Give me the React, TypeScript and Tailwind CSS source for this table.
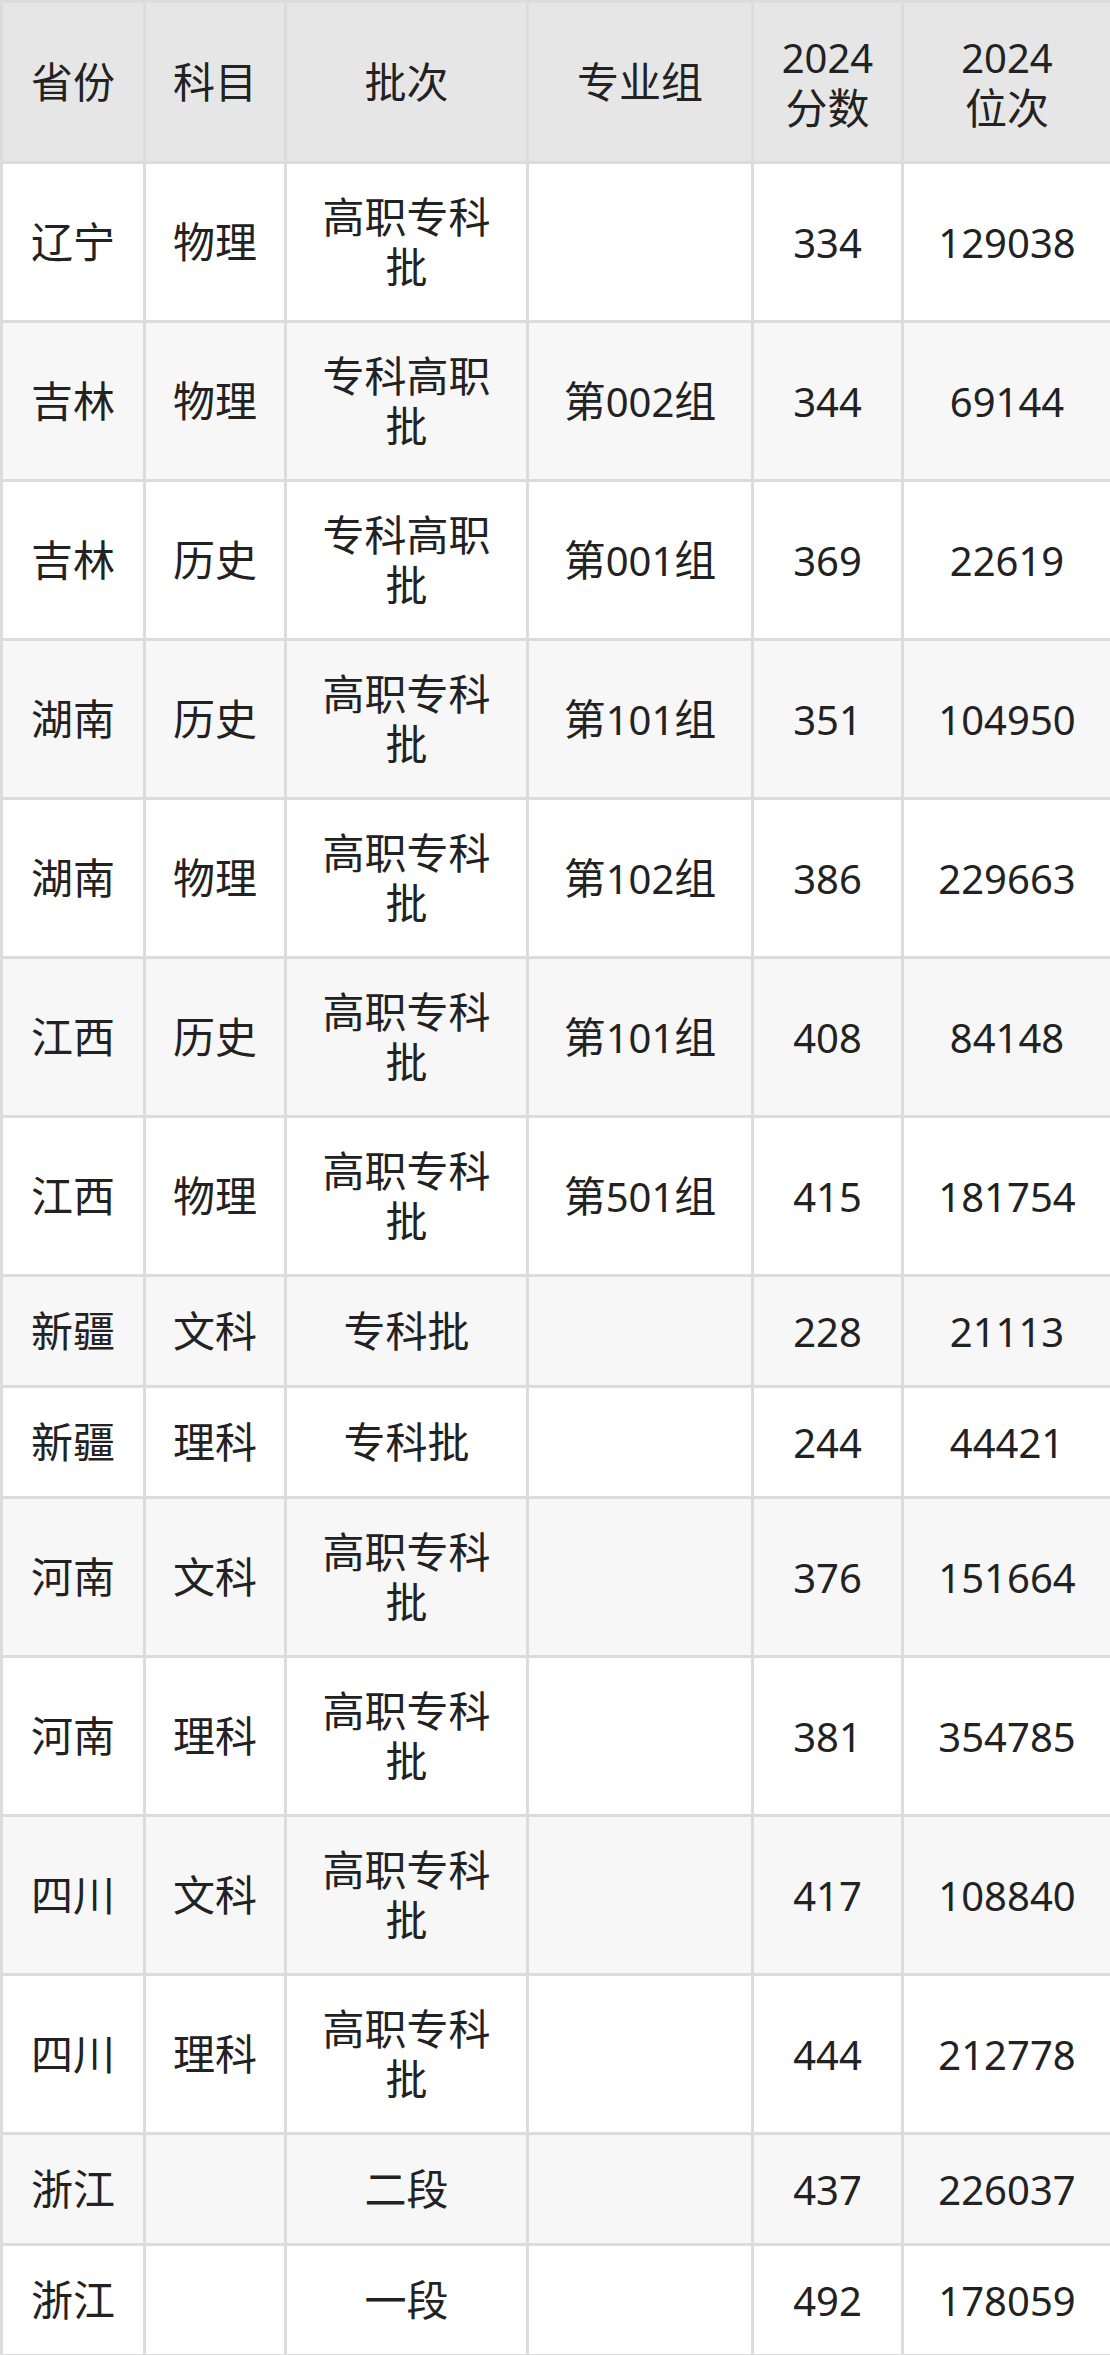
const rows: [string, string, string[], string, string, string][] = [
  ["辽宁", "物理", ["高职专科", "批"], "", "334", "129038"],
  ["吉林", "物理", ["专科高职", "批"], "第002组", "344", "69144"],
  ["吉林", "历史", ["专科高职", "批"], "第001组", "369", "22619"],
  ["湖南", "历史", ["高职专科", "批"], "第101组", "351", "104950"],
  ["湖南", "物理", ["高职专科", "批"], "第102组", "386", "229663"],
  ["江西", "历史", ["高职专科", "批"], "第101组", "408", "84148"],
  ["江西", "物理", ["高职专科", "批"], "第501组", "415", "181754"],
  ["新疆", "文科", ["专科批"], "", "228", "21113"],
  ["新疆", "理科", ["专科批"], "", "244", "44421"],
  ["河南", "文科", ["高职专科", "批"], "", "376", "151664"],
  ["河南", "理科", ["高职专科", "批"], "", "381", "354785"],
  ["四川", "文科", ["高职专科", "批"], "", "417", "108840"],
  ["四川", "理科", ["高职专科", "批"], "", "444", "212778"],
  ["浙江", "", ["二段"], "", "437", "226037"],
  ["浙江", "", ["一段"], "", "492", "178059"],
];

const cell = "border-[3px] border-[#dcdcdc] px-[20px] py-0 text-center align-middle";

// digits come out a touch smaller than the CJK glyphs in the original
function Txt({ s }: { s: string }) {
  const parts = s.split(/(\d+)/).filter(Boolean);
  return (
    <>
      {parts.map((p, i) =>
        /^\d+$/.test(p) ? (
          <span key={i} className="text-[40px]">
            {p}
          </span>
        ) : (
          <span key={i}>{p}</span>
        )
      )}
    </>
  );
}

function Lines({ lines }: { lines: string[] }) {
  return (
    <>
      {lines.map((l, i) => (
        <span key={i}>
          {i > 0 && <br />}
          <Txt s={l} />
        </span>
      ))}
    </>
  );
}

export default function App() {
  return (
    <div
      className="w-[1110px] bg-white text-[#222] text-[42px] leading-[50px]"
      style={{ fontFamily: '"Noto Sans", "Noto Sans CJK SC", sans-serif' }}
    >
      <table className="w-[1110px] table-fixed border-collapse">
        <colgroup>
          <col className="w-[143px]" />
          <col className="w-[141px]" />
          <col className="w-[242px]" />
          <col className="w-[225px]" />
          <col className="w-[150px]" />
          <col className="w-[209px]" />
        </colgroup>
        <thead>
          <tr className="h-[161px] bg-[#e6e6e6]">
            <th className={`${cell} font-normal`}>省份</th>
            <th className={`${cell} font-normal`}>科目</th>
            <th className={`${cell} font-normal`}>批次</th>
            <th className={`${cell} font-normal`}>专业组</th>
            <th className={`${cell} font-normal`}>
              <Lines lines={["2024", "分数"]} />
            </th>
            <th className={`${cell} font-normal`}>
              <Lines lines={["2024", "位次"]} />
            </th>
          </tr>
        </thead>
        <tbody>
          {rows.map(([prov, subj, batch, group, score, rank], i) => (
            <tr
              key={i}
              className={`${batch.length > 1 ? "h-[159px]" : "h-[111px]"} ${
                i % 2 === 1 ? "bg-[#f7f7f7]" : "bg-white"
              }`}
            >
              <td className={cell}>{prov}</td>
              <td className={cell}>{subj}</td>
              <td className={cell}>
                <Lines lines={batch} />
              </td>
              <td className={cell}>
                <Txt s={group} />
              </td>
              <td className={cell}>
                <Txt s={score} />
              </td>
              <td className={cell}>
                <Txt s={rank} />
              </td>
            </tr>
          ))}
        </tbody>
      </table>
    </div>
  );
}
